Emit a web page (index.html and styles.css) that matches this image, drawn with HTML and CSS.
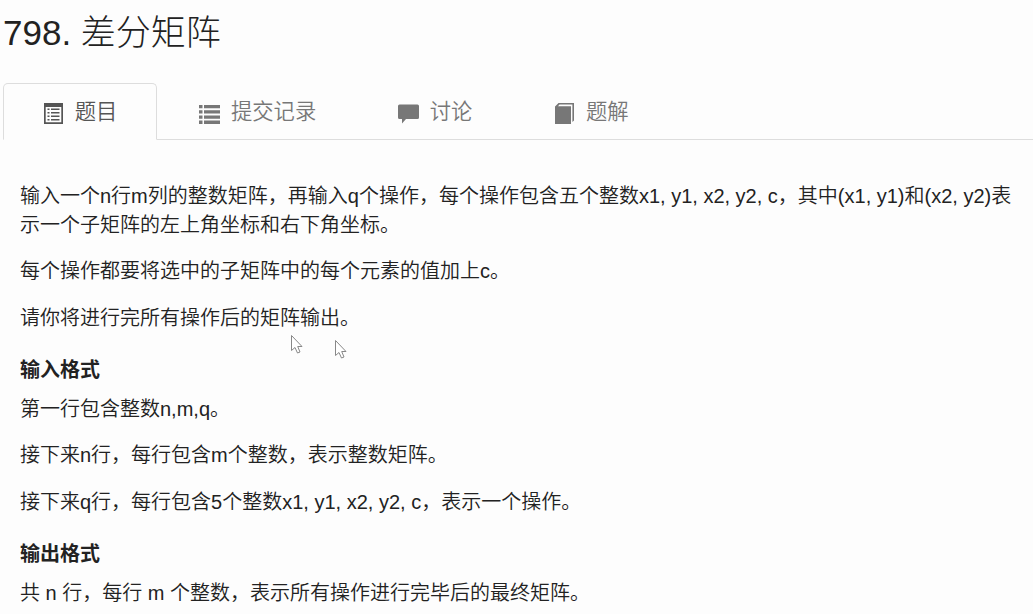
FILE: index.html
```html
<!DOCTYPE html>
<html lang="zh-CN">
  <head>
    <meta charset="UTF-8" />
    <meta name="viewport" content="width=device-width, initial-scale=1.0" />
    <title>798. 差分矩阵</title>
    <link rel="stylesheet" href="styles.css">
  </head>
  <body>
    <h1>798. 差分矩阵</h1>

    <ul class="tabs">
      <li class="active">
        <svg viewBox="0 0 21 21">
          <path d="M1 0h19v21H1z M2.7 4v15.3h15.6V4z" fill-rule="evenodd" />
          <path d="M4.5 5.500h2v1.500h-2z M8 5.500h8.500v1.500H8z M4.500 9h2v1.500h-2z M8 9h8.500v1.500H8z M4.500 12.500h2V14h-2z M8 12.500h8.500V14H8z M4.500 16h2v1.500h-2z M8 16h8.500v1.500H8z" />
        </svg>
        <span>题目</span>
      </li>
      <li>
        <svg viewBox="0 0 21 21">
          <path d="M0 2h3.5v3.3H0z M5 2h16v3.3H5z M0 7.2h3.5v3.3H0z M5 7.2h16v3.3H5z M0 12.4h3.5v3.3H0z M5 12.4h16v3.3H5z M0 17.6h3.5v3.3H0z M5 17.6h16v3.3H5z" />
        </svg>
        <span>提交记录</span>
      </li>
      <li>
        <svg viewBox="0 0 21 21">
          <path d="M1.5 1.5h18q1.5 0 1.5 1.5v11.5q0 1.5-1.5 1.5H8l-4 4.500V16H1.5Q0 16 0 14.500V3q0-1.500 1.500-1.500z" />
        </svg>
        <span>讨论</span>
      </li>
      <li>
        <svg viewBox="0 0 21 21">
          <path d="M1 3.5L4.500 0H20v17.500l-1.600 1.500V1.600H5.500L4 3.300h13V21H1z" />
        </svg>
        <span>题解</span>
      </li>
    </ul>

    <div class="content">
      <p>输入一个n行m列的整数矩阵，再输入q个操作，每个操作包含五个整数x1, y1, x2, y2, c，其中(x1, y1)和(x2, y2)表示一个子矩阵的左上角坐标和右下角坐标。</p>
      <p>每个操作都要将选中的子矩阵中的每个元素的值加上c。</p>
      <p>请你将进行完所有操作后的矩阵输出。</p>
      <h4>输入格式</h4>
      <p>第一行包含整数n,m,q。</p>
      <p>接下来n行，每行包含m个整数，表示整数矩阵。</p>
      <p>接下来q行，每行包含5个整数x1, y1, x2, y2, c，表示一个操作。</p>
      <h4>输出格式</h4>
      <p>共 n 行，每行 m 个整数，表示所有操作进行完毕后的最终矩阵。</p>
    </div>

    <svg class="cursor first" width="13" height="21" viewBox="0 0 13 21">
      <path d="M1.5 1.5v15l3.500-3 2.500 5.500 2.500-1-2.300-5.500h4.300z" />
    </svg>
    <svg class="cursor second" width="13" height="21" viewBox="0 0 13 21">
      <path d="M1.5 1.5v15l3.500-3 2.500 5.500 2.500-1-2.300-5.500h4.300z" />
    </svg>
  </body>
</html>
```

FILE: styles.css
```css
* {
  margin: 0;
  padding: 0;
  box-sizing: border-box;
}
body {
  height: 614px;
  overflow: hidden;
  font-family: "Liberation Sans", "Noto Sans CJK SC", sans-serif;
  font-size: 20px;
  font-weight: 350;
  line-height: 28.5px;
  color: #222;
  background-color: #fdfdfd;
}
h1 {
  padding: 13px 3px 0;
  height: 83px;
  font-size: 35px;
  font-weight: 300;
  line-height: 40px;
}
ul.tabs {
  display: flex;
  height: 57px;
  margin-left: 3px;
  border-bottom: 1px solid #ddd;
  list-style: none;
}
ul.tabs li {
  display: flex;
  align-items: center;
  height: 57px;
  margin-right: 2.3px;
  padding: 0 38.5px;
  font-size: 21.3px;
  color: #777;
  border: 1px solid transparent;
  border-radius: 5px 5px 0 0;
}
ul.tabs li.active {
  color: #555;
  background-color: #fdfdfd;
  border-color: #ddd;
  border-bottom-color: #fdfdfd;
}
ul.tabs svg {
  width: 21px;
  height: 21px;
  margin-top: 4px;
  margin-right: 11.3px;
  fill: currentColor;
}
ul.tabs span {
  padding-top: 2px;
}
.content {
  padding: 42px 20px 0;
}
.content p {
  margin-bottom: 18px;
}
.content h4 {
  margin: 23.5px 0 10.5px;
  font-size: 20px;
  font-weight: 700;
}
.cursor {
  position: absolute;
  fill: #fff;
  stroke: #888;
}
.cursor.first {
  top: 334px;
  left: 290px;
}
.cursor.second {
  top: 339px;
  left: 334px;
}
```
